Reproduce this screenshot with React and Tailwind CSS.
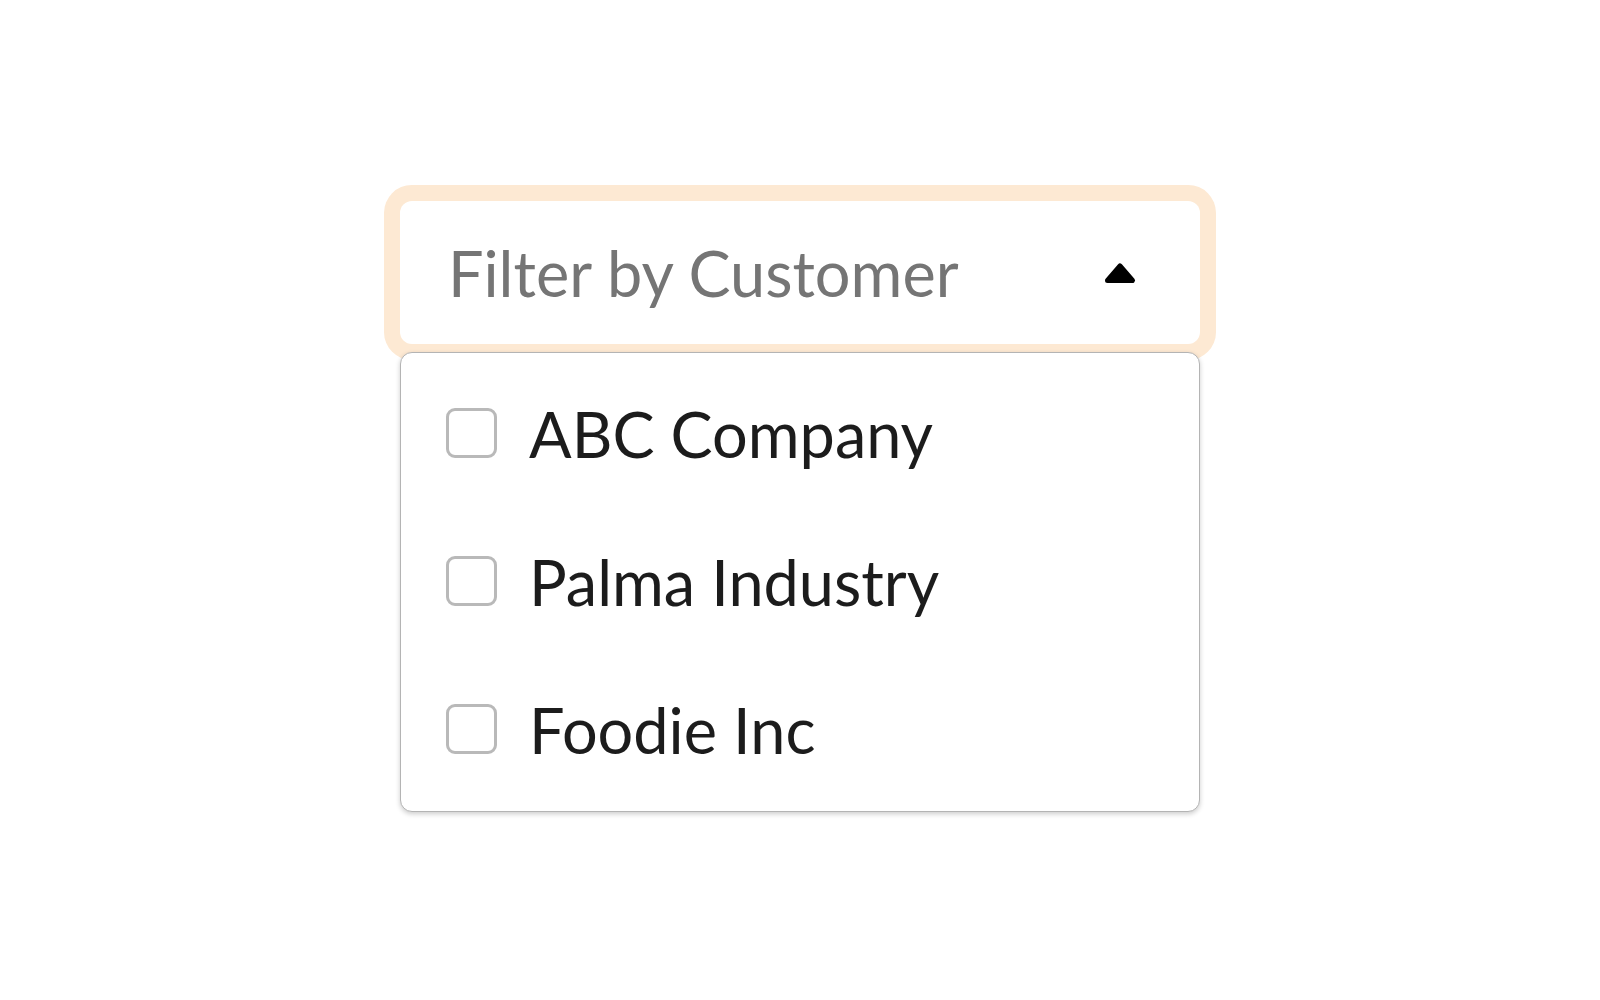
const customers = ['ABC Company', 'Palma Industry', 'Foodie Inc']

const CaretUp = () => (
  <svg width="34" height="22" viewBox="0 0 34 22" className="shrink-0">
    <path d="M4.5 18.5 L17 4 L29.5 18.5 Z" fill="#000" stroke="#000" strokeWidth="5" strokeLinejoin="round" />
  </svg>
)

export default function App() {
  return (
    <div className="min-h-screen bg-white flex justify-center pt-[201px]" style={{ fontFamily: 'Lato, "Noto Sans", sans-serif' }}>
      <div className="w-[800px] flex flex-col">
        {/* Trigger */}
        <div className="h-[143px] bg-white rounded-[12px] ring-[16px] ring-[#fde9d3] flex items-center justify-between pl-[48px] pr-[63px]">
          <span className="text-[63px] leading-none text-[#757575] font-normal">Filter by Customer</span>
          <CaretUp />
        </div>

        {/* Options */}
        <div className="relative z-10 mt-[8px] bg-white border border-[#b4b4b4] rounded-[12px] shadow-[0_2px_5px_rgba(0,0,0,0.2)] pt-[6px] pb-[8px]">
          {customers.map((name) => (
            <label key={name} className="h-[148px] flex items-center pl-[45px] cursor-pointer">
              <span className="w-[51px] h-[50px] rounded-[9px] border-[3px] border-[#b9b9b9] bg-white shrink-0" />
              <span className="ml-[32px] text-[63px] leading-none text-[#1c1c1c]">{name}</span>
            </label>
          ))}
        </div>
      </div>
    </div>
  )
}
